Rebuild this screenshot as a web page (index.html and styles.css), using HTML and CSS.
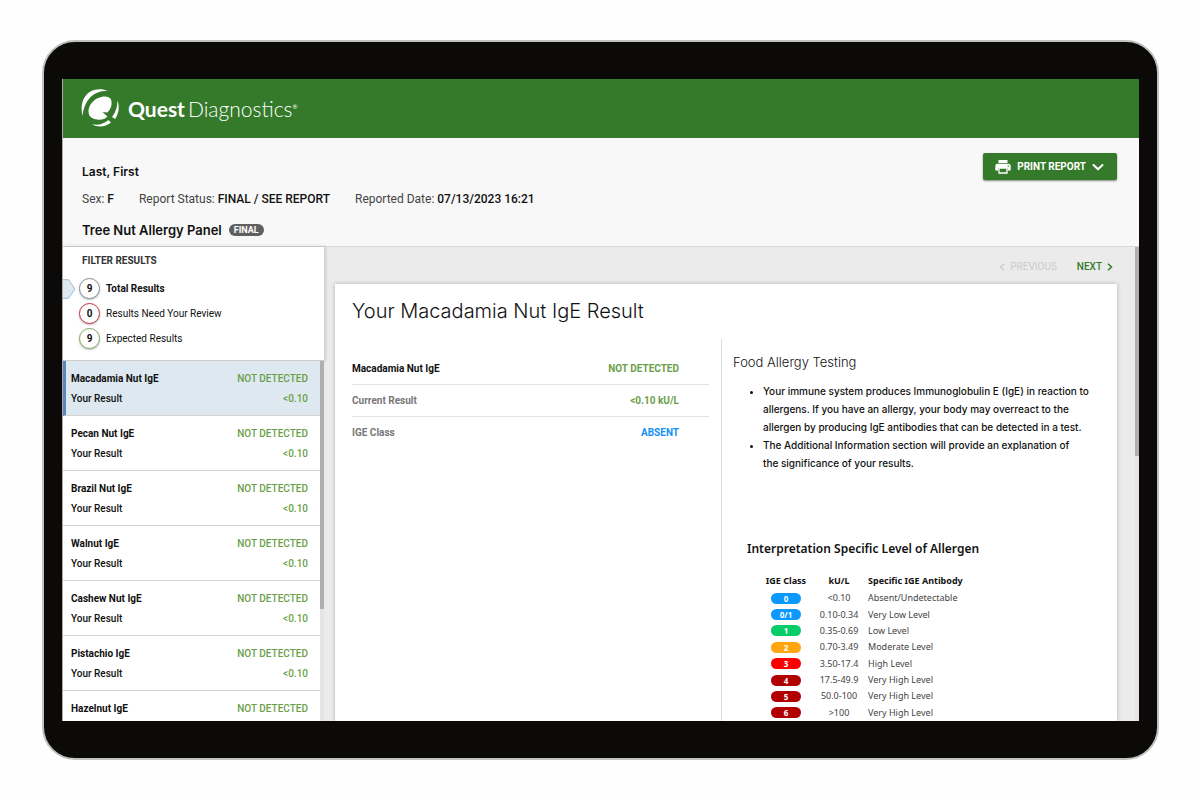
FILE: index.html
```html
<!DOCTYPE html>
<html lang="en">
<head>
<meta charset="utf-8">
<meta name="viewport" content="width=device-width, initial-scale=1">
<title>Tree Nut Allergy Panel - Quest Diagnostics</title>
<link rel="stylesheet" href="styles.css">
</head>
<body>
<div class="tablet">
<div class="screen">
  <header class="topbar">
    <a class="brand" href="#" aria-label="Quest Diagnostics">
      <svg class="brand-mark" viewBox="0 0 38 38" aria-hidden="true">
        <path fill="#fff" d="M1.500 27C-1.500 15 3 3.500 14 .8C19-.4 23 .3 26.500 2C14 1.500 4 8.500 1.500 27Z"/>
        <path fill="#fff" d="M30 10.500C31.500 15 30 20 26.500 23.500L21.500 23L26.500 27.500L24 29.500C18 32 10 30.500 8 25.500C6 19 10.500 12 17 9C22.500 6.500 28.500 7 30 10.500Z"/>
        <path fill="#fff" d="M36.500 11.500C39 18 37.500 25 34 30L31 28C34.500 23.500 36.500 18 36.500 11.500Z"/>
        <path fill="#fff" d="M11 35.200C17 36.500 22.500 35.200 27.500 31L30 33.500C24.500 38 17 38.800 11 35.200Z"/>
      </svg>
      <span class="brand-name"><strong>Quest</strong><span class="brand-light">Diagnostics</span><sup>®</sup></span>
    </a>
  </header>

  <section class="patient">
    <div class="patient-info">
      <h1 class="patient-name">Last, First</h1>
      <div class="facts">
        <span>Sex: <b>F</b></span>
        <span>Report Status: <b>FINAL / SEE REPORT</b></span>
        <span>Reported Date: <b>07/13/2023 16:21</b></span>
      </div>
      <h2 class="panel-name">Tree Nut Allergy Panel <span class="badge">FINAL</span></h2>
    </div>
    <button class="print" type="button">
      <svg class="print-icon" viewBox="0 0 16 14" aria-hidden="true">
        <path fill="#fff" d="M3.500 0h9v3h-9zM2.500 3.800h11A2.200 2.200 0 0 1 15.700 6v4.500h-3V8h-9.400v2.500h-3V6A2.200 2.200 0 0 1 2.500 3.800z"/>
        <path fill="none" stroke="#fff" stroke-width="1.300" d="M4 8h8v5H4z"/>
        <circle cx="13.300" cy="6" r=".7" fill="#347a2a"/>
      </svg>
      PRINT REPORT
      <svg class="caret" viewBox="0 0 12 8" aria-hidden="true"><path fill="none" stroke="#fff" stroke-width="2" stroke-linecap="round" stroke-linejoin="round" d="M1.500 2L6 6.300L10.500 2"/></svg>
    </button>
  </section>

  <main class="workspace">
    <aside class="sidebar">
      <section class="filters">
        <h3 class="filters-title">FILTER RESULTS</h3>
        <button class="filter is-active" type="button">
          <svg class="pointer" viewBox="0 0 13 20" aria-hidden="true"><path fill="#dde8f1" stroke="#9dbad6" d="M-1 .7H5.500L12 10L5.500 19.300H-1z"/></svg>
          <span class="count">9</span>Total Results</button>
        <button class="filter" type="button"><span class="count count-red">0</span>Results Need Your Review</button>
        <button class="filter" type="button"><span class="count count-green">9</span>Expected Results</button>
      </section>
      <div class="list-wrap">
        <ul class="results">
          <li class="result is-selected"><div class="line"><strong>Macadamia Nut IgE</strong><span class="ok">NOT DETECTED</span></div><div class="line"><span>Your Result</span><span class="ok">&lt;0.10</span></div></li>
          <li class="result"><div class="line"><strong>Pecan Nut IgE</strong><span class="ok">NOT DETECTED</span></div><div class="line"><span>Your Result</span><span class="ok">&lt;0.10</span></div></li>
          <li class="result"><div class="line"><strong>Brazil Nut IgE</strong><span class="ok">NOT DETECTED</span></div><div class="line"><span>Your Result</span><span class="ok">&lt;0.10</span></div></li>
          <li class="result"><div class="line"><strong>Walnut IgE</strong><span class="ok">NOT DETECTED</span></div><div class="line"><span>Your Result</span><span class="ok">&lt;0.10</span></div></li>
          <li class="result"><div class="line"><strong>Cashew Nut IgE</strong><span class="ok">NOT DETECTED</span></div><div class="line"><span>Your Result</span><span class="ok">&lt;0.10</span></div></li>
          <li class="result"><div class="line"><strong>Pistachio IgE</strong><span class="ok">NOT DETECTED</span></div><div class="line"><span>Your Result</span><span class="ok">&lt;0.10</span></div></li>
          <li class="result"><div class="line"><strong>Hazelnut IgE</strong><span class="ok">NOT DETECTED</span></div></li>
        </ul>
        <div class="track"><div class="thumb thumb-list"></div></div>
      </div>
    </aside>

    <div class="detail">
      <div class="detail-body">
        <nav class="pager">
          <button class="page-link" type="button" disabled><svg class="chev" viewBox="0 0 6 8" aria-hidden="true"><path d="M5 .7L1.500 4L5 7.300"/></svg>PREVIOUS</button>
          <button class="page-link" type="button">NEXT<svg class="chev" viewBox="0 0 6 8" aria-hidden="true"><path d="M1 .7L4.500 4L1 7.300"/></svg></button>
        </nav>
        <article class="card">
          <h2 class="card-title">Your Macadamia Nut IgE Result</h2>
          <div class="columns">
            <table class="summary">
              <tr><th scope="row" class="lead">Macadamia Nut IgE</th><td class="ok">NOT DETECTED</td></tr>
              <tr><th scope="row">Current Result</th><td class="ok">&lt;0.10 kU/L</td></tr>
              <tr><th scope="row">IGE Class</th><td class="absent">ABSENT</td></tr>
            </table>
            <section class="about">
              <h3 class="about-title">Food Allergy Testing</h3>
              <ul class="notes">
                <li>Your immune system produces Immunoglobulin E (IgE) in reaction to<br>allergens. If you have an allergy, your body may overreact to the<br>allergen by producing IgE antibodies that can be detected in a test.</li>
                <li>The Additional Information section will provide an explanation of<br>the significance of your results.</li>
              </ul>
              <div class="guide">
                <h3 class="guide-title">Interpretation Specific Level of Allergen</h3>
                <table class="levels">
                  <thead><tr><th>IGE Class</th><th>kU/L</th><th>Specific IGE Antibody</th></tr></thead>
                  <tbody>
                    <tr><td><span class="pill blue">0</span></td><td>&lt;0.10</td><td>Absent/Undetectable</td></tr>
                    <tr><td><span class="pill blue">0/1</span></td><td>0.10-0.34</td><td>Very Low Level</td></tr>
                    <tr><td><span class="pill green">1</span></td><td>0.35-0.69</td><td>Low Level</td></tr>
                    <tr><td><span class="pill amber">2</span></td><td>0.70-3.49</td><td>Moderate Level</td></tr>
                    <tr><td><span class="pill red">3</span></td><td>3.50-17.4</td><td>High Level</td></tr>
                    <tr><td><span class="pill dark">4</span></td><td>17.5-49.9</td><td>Very High Level</td></tr>
                    <tr><td><span class="pill dark">5</span></td><td>50.0-100</td><td>Very High Level</td></tr>
                    <tr><td><span class="pill dark">6</span></td><td>&gt;100</td><td>Very High Level</td></tr>
                  </tbody>
                </table>
              </div>
            </section>
          </div>
        </article>
      </div>
      <div class="track"><div class="thumb thumb-page"></div></div>
    </div>
  </main>
</div>
</div>
</body>
</html>
```
FILE: styles.css
```css
* { box-sizing: border-box; }
body {
  margin: 0;
  height: 100vh;
  padding: 40px 41px 40px 42px;
  display: flex;
  background: #fefefe;
  color: #111;
  font-family: Roboto, "Liberation Sans", sans-serif;
  font-size: 10px;
}
h1, h2, h3, ul { margin: 0; padding: 0; }
button { border: 0; padding: 0; background: none; font: inherit; color: inherit; cursor: pointer; }

.tablet {
  flex: 1;
  min-width: 0;
  display: flex;
  padding: 37px 18px;
  border: 2px solid #c0c0be;
  border-radius: 33px;
  background: #0b0a08;
}
.screen {
  flex: 1;
  min-width: 0;
  display: flex;
  flex-direction: column;
  overflow: hidden;
  background: #f8f8f8;
  border-left: 1px solid #aaa;
}

.topbar { flex: none; padding: 10px 18px 11px; background: #347a2a; }
.brand { display: flex; align-items: center; gap: 9px; color: #fff; text-decoration: none; }
.brand-mark { width: 38px; height: 38px; }
.brand-name { font-family: Lato, sans-serif; font-size: 21px; line-height: 24px; }
.brand-name strong { font-weight: 700; margin-right: 3px; }
.brand-light { font-weight: 300; }
.brand-name sup { font-size: 6px; }

.patient {
  flex: none;
  display: flex;
  justify-content: space-between;
  align-items: flex-start;
  padding: 15px 22px 7px 19px;
  border-bottom: 1px solid #d8d8d8;
}
.patient-name { margin-top: 10px; font-family: Inter, sans-serif; font-size: 12px; line-height: 18px; font-weight: 600; }
.facts { display: flex; gap: 25px; margin-top: 9px; font-size: 12px; line-height: 18px; color: #444; }
.facts b { font-weight: 500; color: #111; }
.panel-name { display: flex; align-items: center; gap: 7px; margin-top: 13px; font-family: Inter, sans-serif; font-size: 13px; line-height: 18px; font-weight: 600; }
.badge { padding: 0 5px; border-radius: 6px; background: #5f5f5f; color: #fff; font-family: Roboto, sans-serif; font-size: 9px; line-height: 12px; font-weight: 700; }
.print {
  display: flex;
  align-items: center;
  gap: 6px;
  padding: 0 13px 0 12px;
  height: 27px;
  border-radius: 2px;
  background: #347a2a;
  box-shadow: 0 1px 2px #0007;
  color: #fff;
  font-size: 10px;
  font-weight: 700;
}
.print-icon { width: 16px; height: 14px; }
.caret { width: 12px; height: 8px; }

.workspace { flex: 1; min-height: 0; display: flex; background: #ebebeb; }
.sidebar { flex: none; width: 261px; display: flex; flex-direction: column; }
.filters {
  display: flex;
  flex-direction: column;
  padding: 5px 0 9px;
  background: #fff;
  border-bottom: 1px solid #ccc;
  box-shadow: 1px 0 4px #0003;
}
.filters-title { margin-bottom: 6px; padding-left: 19px; font-size: 10px; line-height: 18px; color: #333; }
.filter {
  position: relative;
  display: flex;
  align-items: center;
  gap: 6px;
  height: 25px;
  padding-left: 16px;
  text-align: left;
}
.filter.is-active { font-weight: 700; }
.pointer { position: absolute; left: 0; width: 13px; height: 20px; }
.count {
  width: 21px;
  border: 1px solid #87909a;
  border-radius: 50%;
  background: #fff;
  box-shadow: 0 1px 2px #0004;
  font-weight: 700;
  line-height: 19px;
  text-align: center;
}
.count-red { border-color: #c8323c; }
.count-green { border-color: #7faf62; }

.list-wrap { flex: 1; min-height: 0; display: flex; }
.results { flex: 1; overflow: hidden; list-style: none; background: #fff; }
.result { padding: 8px 12px 7px 8px; border-bottom: 1px solid #d2d2d2; font-weight: 500; }
.result:last-child { border-bottom: 0; }
.result.is-selected { padding-left: 5px; border-left: 3px solid #5a88bb; background: #dde8f1; }
.line { display: flex; justify-content: space-between; line-height: 19px; height: 20px; }
.line + .line { height: 19px; }
.ok { color: #6a9f49; }
.track { flex: none; width: 4px; background: #e4e4e4; }
.thumb { background: #afafaf; }
.thumb-list { height: 69%; }
.thumb-page { height: 44%; }

.detail { flex: 1; min-width: 0; display: flex; }
.detail-body { flex: 1; min-width: 0; display: flex; flex-direction: column; padding: 0 18px 0 11px; }
.pager { flex: none; display: flex; justify-content: flex-end; gap: 20px; padding: 11px 4px 8px 0; }
.page-link { display: flex; align-items: center; gap: 5px; line-height: 18px; font-weight: 500; color: #347a2a; }
.page-link:disabled { color: #ccc; font-weight: 400; }
.chev { width: 6px; height: 8px; fill: none; stroke: currentColor; stroke-width: 1.5; }
.card { flex: 1; min-height: 0; display: flex; flex-direction: column; background: #fff; box-shadow: 0 0 4px #0004; }
.card-title { padding: 13px 17px 14px; font-family: Inter, sans-serif; font-size: 20px; line-height: 28px; font-weight: 300; }
.columns { flex: 1; min-height: 0; display: grid; grid-template-columns: 375fr 396fr; padding-left: 11px; overflow: hidden; }
.summary { align-self: start; margin: 14px 12px 0 6px; border-collapse: collapse; line-height: 18px; }
.summary tr + tr { border-top: 1px solid #e2e2e2; }
.summary th { padding: 7px 0 6px; text-align: left; color: #777; font-weight: 700; }
.summary .lead { color: #111; }
.summary td { padding: 7px 30px 6px 0; text-align: right; font-weight: 700; }
.summary .absent { color: #1491f5; }
.about { padding: 14px 11px 0; border-left: 1px solid #ddd; }
.about-title { font-family: Inter, sans-serif; font-size: 13px; line-height: 18px; font-weight: 300; }
.notes { margin-top: 11px; padding-left: 30px; font-family: Inter, sans-serif; font-size: 10px; line-height: 18px; font-weight: 500; white-space: nowrap; }
.guide { margin-top: 67px; padding-left: 14px; font-family: "Noto Sans", sans-serif; }
.guide-title { font-size: 12px; line-height: 20px; font-weight: 600; }
.levels { margin: 12px 0 0 15px; height: 150px; border-collapse: collapse; font-size: 9px; line-height: 14px; color: #444; }
.levels th { height: 19px; color: #111; font-weight: 700; }
.levels th, .levels td { padding: 0; text-align: center; white-space: nowrap; }
.levels th:first-child, .levels td:first-child { width: 48px; }
.levels th:nth-child(2), .levels td:nth-child(2) { width: 58px; }
.levels th:last-child, .levels td:last-child { text-align: left; }
.pill { display: block; width: 30px; margin: 0 auto; border-radius: 6px; color: #fff; font-size: 8px; line-height: 11px; font-weight: 700; }
.blue { background: #0b98ff; }
.green { background: #04cc68; }
.amber { background: #ffa50f; }
.red { background: #fb0000; }
.dark { background: #b00000; }
```
